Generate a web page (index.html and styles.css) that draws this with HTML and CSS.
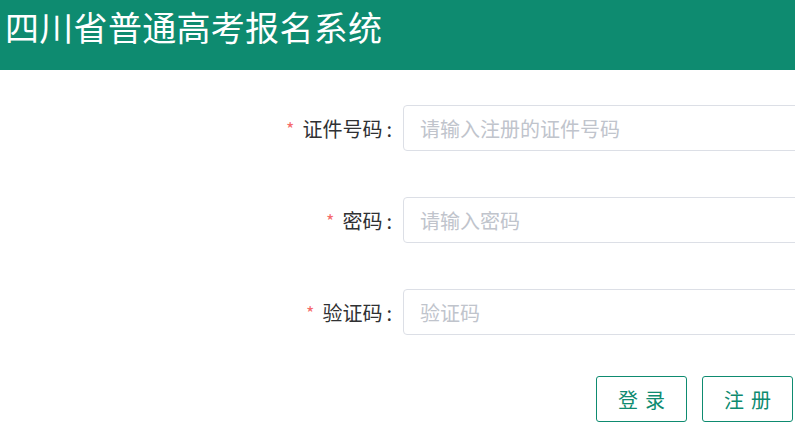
FILE: index.html
```html
<!DOCTYPE html>
<html lang="zh-CN">
<head>
<meta charset="utf-8">
<title>四川省普通高考报名系统</title>
<link rel="stylesheet" href="styles.css">
</head>
<body>
<header class="topbar">
  <h1 class="title">四川省普通高考报名系统</h1>
</header>
<main class="form">
  <div class="row">
    <label class="label"><span class="req">*</span>证件号码<span class="colon">:</span></label>
    <input class="field" type="text" placeholder="请输入注册的证件号码">
  </div>
  <div class="row">
    <label class="label"><span class="req">*</span>密码<span class="colon">:</span></label>
    <input class="field" type="password" placeholder="请输入密码">
  </div>
  <div class="row">
    <label class="label"><span class="req">*</span>验证码<span class="colon">:</span></label>
    <input class="field" type="text" placeholder="验证码">
  </div>
  <div class="actions">
    <button class="btn" type="button">登录</button>
    <button class="btn" type="button">注册</button>
  </div>
</main>
</body>
</html>
```
FILE: styles.css
```css
html, body {
  margin: 0;
  padding: 0;
  overflow: hidden;
  background: #ffffff;
  font-family: "Noto Sans CJK SC", "Noto Sans", "Liberation Sans", sans-serif;
}

.topbar {
  height: 70px;
  background: #0e8b70;
  box-sizing: border-box;
  padding: 9px 0 0 5px;
}

.title {
  margin: 0;
  font-size: 34px;
  font-weight: normal;
  line-height: 36px;
  letter-spacing: 0.3px;
  color: #ffffff;
  white-space: nowrap;
}

.form {
  padding-top: 35px;
  overflow: hidden;
}

.row {
  display: flex;
  align-items: center;
  height: 46px;
  margin-bottom: 46px;
  overflow: hidden;
}

.row:nth-child(3) {
  margin-bottom: 41px;
}

.label {
  flex: none;
  width: 392px;
  margin-right: 11px;
  display: flex;
  justify-content: flex-end;
  align-items: center;
  font-size: 20px;
  color: #303133;
  white-space: nowrap;
}

.colon {
  margin-left: 4px;
}

.req {
  color: #f56c6c;
  margin-right: 8px;
  font-size: 18px;
}

.field {
  flex: none;
  width: 420px;
  height: 46px;
  box-sizing: border-box;
  border: 1px solid #dcdfe6;
  border-radius: 4px;
  padding: 0 16px;
  font-family: inherit;
  font-size: 20px;
  color: #606266;
  outline: none;
  background: #ffffff;
}

.field::placeholder {
  color: #c0c4cc;
}

.actions {
  display: flex;
  gap: 15px;
  padding-left: 596px;
}

.btn {
  width: 91px;
  height: 46px;
  box-sizing: border-box;
  border: 1px solid #0e8b70;
  border-radius: 3px;
  background: #ffffff;
  color: #0e8b70;
  font-family: inherit;
  font-size: 20px;
  letter-spacing: 7px;
  padding: 0 0 0 7px;
  cursor: pointer;
}
```
